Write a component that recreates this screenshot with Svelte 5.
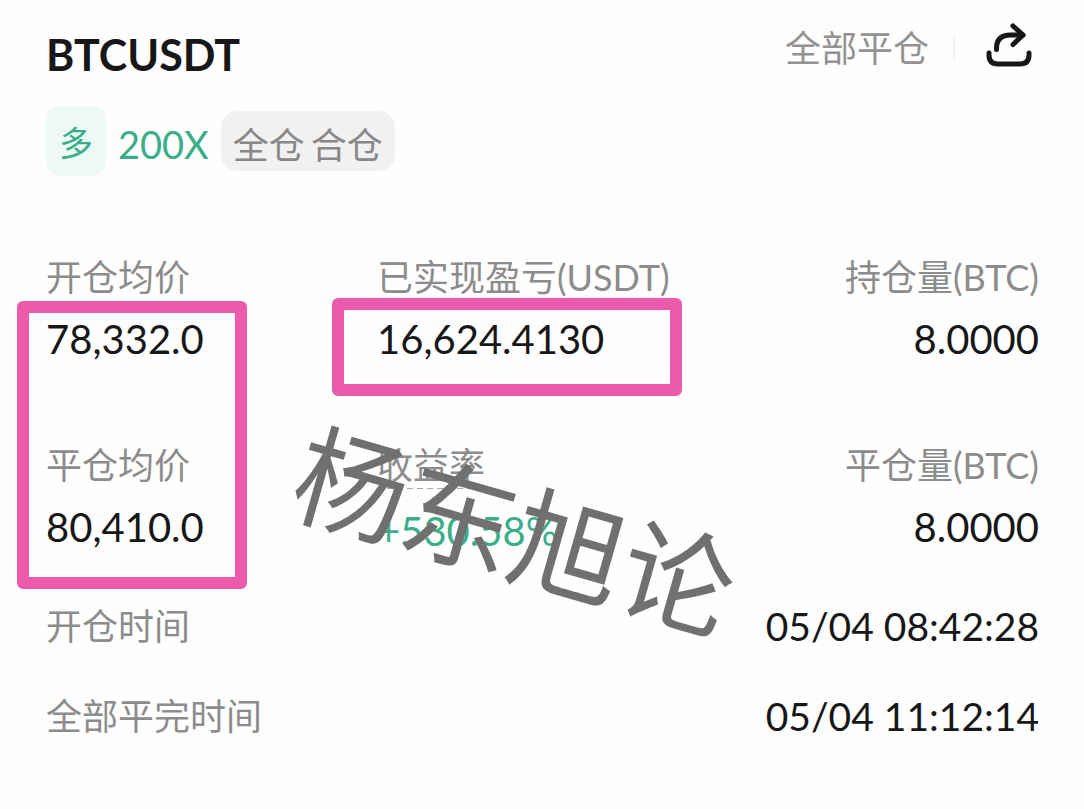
<script lang="ts">
	interface Field {
		label: string;
		value: string;
		profit?: boolean;
	}

	const fields: Field[] = [
		{ label: '开仓均价', value: '78,332.0' },
		{ label: '已实现盈亏(USDT)', value: '16,624.4130' },
		{ label: '持仓量(BTC)', value: '8.0000' },
		{ label: '平仓均价', value: '80,410.0' },
		{ label: '收益率', value: '+530.58%', profit: true },
		{ label: '平仓量(BTC)', value: '8.0000' }
	];

	const times: Field[] = [
		{ label: '开仓时间', value: '05/04 08:42:28' },
		{ label: '全部平完时间', value: '05/04 11:12:14' }
	];
</script>

<main class="card">
	<header>
		<h1>BTCUSDT</h1>
		<div class="actions">
			<span class="status">全部平仓</span>
			<span class="divider"></span>
			<button class="share" aria-label="分享">
				<svg viewBox="0 0 48 50" width="48" height="50" fill="none" stroke="#171717" stroke-width="5" stroke-linecap="round" stroke-linejoin="round">
					<path d="M4 30v2q0 9 9 9h22q9 0 9-9v-2" />
					<path d="M11.500 26.500v-1q0-13.500 14-13.500H38" />
					<path d="M28 3l10 9L28 21.500" />
				</svg>
			</button>
		</div>
	</header>

	<div class="tags">
		<span class="side">多</span>
		<span class="leverage">200X</span>
		<span class="mode"><span>全仓</span><span>合仓</span></span>
	</div>

	<section class="details">
		<dl class="grid">
			{#each fields as field}
				<div class="field">
					<dt><span class:hint={field.profit}>{field.label}</span></dt>
					<dd class:profit={field.profit}>{field.value}</dd>
				</div>
			{/each}
		</dl>
		<div class="marker prices"></div>
		<div class="marker pnl"></div>
		<div class="watermark">杨东旭论</div>
	</section>

	<dl class="times">
		{#each times as time}
			<div class="time">
				<dt>{time.label}</dt>
				<dd>{time.value}</dd>
			</div>
		{/each}
	</dl>
</main>

<style>
	:global(body) {
		margin: 0;
		background: #fefefe;
	}

	.card {
		padding: 20px 45px 40px 46px;
		font-family: Lato, 'Noto Sans CJK SC', sans-serif;
		font-size: 36px;
		color: #171717;
	}

	header {
		display: flex;
		justify-content: space-between;
		align-items: flex-start;
	}

	h1 {
		margin: 0;
		padding-top: 7px;
		font-size: 43px;
		line-height: 56px;
		font-weight: 700;
	}

	.actions {
		display: flex;
		align-items: center;
		padding-right: 6px;
	}

	.status {
		line-height: 56px;
		color: #929292;
	}

	.divider {
		width: 2px;
		height: 24px;
		margin: 0 30px 0 24px;
		background: #f0f0f0;
	}

	.share {
		display: flex;
		padding: 0;
		border: 0;
		background: none;
		cursor: pointer;
	}

	.tags {
		display: flex;
		align-items: center;
		margin-top: 23px;
	}

	.side {
		box-sizing: border-box;
		width: 60px;
		height: 70px;
		padding-top: 2px;
		border-radius: 14px;
		background: #ecf9f4;
		color: #3aae88;
		font-size: 34px;
		line-height: 70px;
		text-align: center;
	}

	.leverage {
		margin: 0 12px;
		padding-top: 6px;
		color: #3aae88;
		font-size: 38px;
	}

	.mode {
		display: flex;
		gap: 6px;
		height: 54px;
		padding: 6px 12px 0;
		border-radius: 16px;
		background: #f1f1f1;
		color: #888;
		line-height: 56px;
	}

	.details {
		position: relative;
		margin-top: 75px;
	}

	dl,
	dd {
		margin: 0;
	}

	.grid {
		display: grid;
		grid-template-columns: repeat(3, 1fr);
		row-gap: 74px;
	}

	.field:nth-child(3n) {
		text-align: right;
	}

	dt {
		color: #8c8c8c;
		line-height: 52px;
		white-space: nowrap;
	}

	dd {
		font-size: 40px;
		line-height: 52px;
	}

	.field dd {
		margin-top: 10px;
	}

	.hint {
		display: inline-block;
		height: 50px;
		background: repeating-linear-gradient(90deg, #aaa 0 6px, transparent 6px 10px) bottom / 100% 1px no-repeat;
	}

	.field .profit {
		margin-top: 14px;
		margin-bottom: -4px;
		color: #3aae88;
	}

	/* highlight frames drawn over the fields */
	.marker {
		position: absolute;
		box-sizing: border-box;
		border: 12px solid #ec5bab;
		border-radius: 6px;
	}

	.prices {
		top: 50px;
		left: -29px;
		width: 230px;
		height: 288px;
	}

	.pnl {
		top: 47px;
		left: 286px;
		width: 350px;
		height: 98px;
	}

	.watermark {
		position: absolute;
		top: 195px;
		left: 243px;
		color: #707070;
		font-size: 113px;
		line-height: 170px;
		white-space: nowrap;
		transform: rotate(16deg);
	}

	.times {
		display: flex;
		flex-direction: column;
		gap: 38px;
		margin-top: 47px;
	}

	.time {
		display: flex;
		justify-content: space-between;
	}

	.time dd {
		font-size: 39px;
	}
</style>
